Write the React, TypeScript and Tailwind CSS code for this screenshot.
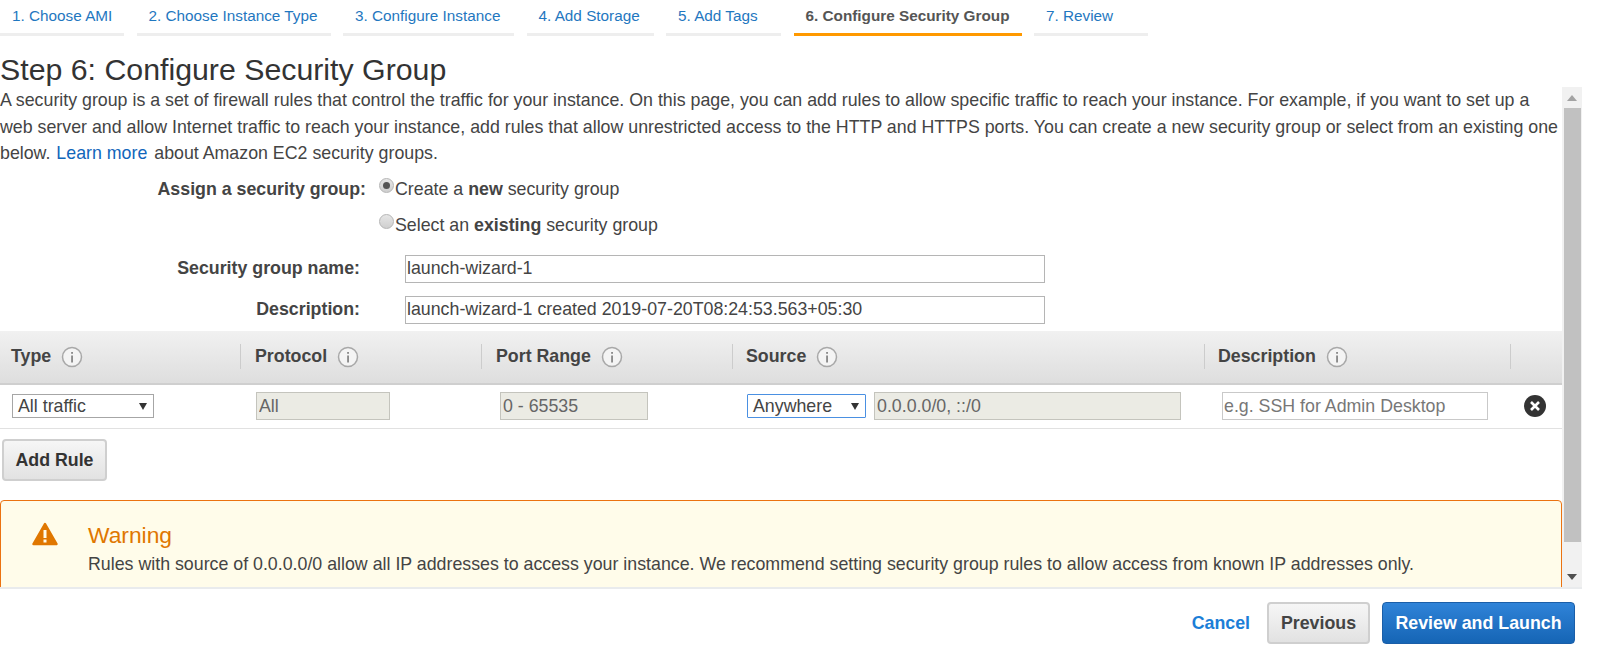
import React from "react";

const tabs = [
  { label: "1. Choose AMI", w: "w-[124px]" },
  { label: "2. Choose Instance Type", w: "w-[194px]" },
  { label: "3. Configure Instance", w: "w-[171px]" },
  { label: "4. Add Storage", w: "w-[127px]" },
  { label: "5. Add Tags", w: "w-[115px]" },
  { label: "6. Configure Security Group", w: "w-[228px]", active: true },
  { label: "7. Review", w: "w-[114px]" },
];

const columns = [
  { label: "Type", w: "w-[240px]", pl: "pl-[11px]" },
  { label: "Protocol", w: "w-[241px]", pl: "pl-[14px]" },
  { label: "Port Range", w: "w-[251px]", pl: "pl-[14px]" },
  { label: "Source", w: "w-[472px]", pl: "pl-[13px]" },
  { label: "Description", w: "w-[306px]", pl: "pl-[13px]" },
];

function InfoIcon() {
  return (
    <svg width="22" height="22" viewBox="0 0 22 22" className="shrink-0">
      <circle cx="11" cy="11" r="9.5" fill="#f4f4f4" stroke="#a8a8a8" strokeWidth="1.5" />
      <rect x="10.2" y="9.5" width="1.7" height="7" fill="#808080" />
      <rect x="10.2" y="6" width="1.7" height="1.8" fill="#808080" />
    </svg>
  );
}

function Radio({ checked }: { checked?: boolean }) {
  return (
    <span className="mt-[-8px] flex h-[15px] w-[15px] shrink-0 items-center justify-center rounded-full border border-[#b5b5b5] bg-gradient-to-b from-[#e6e6e6] to-[#cfcfcf]">
      {checked && <span className="h-[7px] w-[7px] rounded-full bg-[#555]" />}
    </span>
  );
}

function SelectBox({ label, className }: { label: string; className: string }) {
  return (
    <div className={`flex h-[24px] items-center justify-between bg-white pr-[6px] text-[17.8px] text-[#444] ${className}`}>
      <span>{label}</span>
      <svg width="8" height="8" viewBox="0 0 8 8">
        <path d="M0 1h8L4 8z" fill="#333" />
      </svg>
    </div>
  );
}

function DisabledInput({ value, className }: { value: string; className: string }) {
  return (
    <input
      readOnly
      value={value}
      className={`h-[28px] border border-[#c4c4bd] bg-[#ebebe4] pl-[2px] text-[17.8px] text-[#666] outline-none ${className}`}
    />
  );
}

export default function App() {
  return (
    <div className="h-[656px] w-[1600px] overflow-hidden bg-white font-['Liberation_Sans',Arial,sans-serif] text-[#444]">
      <div className="flex h-[36px] gap-[12.5px]">
        {tabs.map((t) => (
          <div
            key={t.label}
            className={`${t.w} border-b-[3px] pl-[12px] pt-[7px] text-[15.3px] leading-[17px] ${
              t.active ? "border-[#ff9900] font-bold text-[#555]" : "border-[#eeeeee] text-[#1f77c0]"
            }`}
          >
            {t.label}
          </div>
        ))}
      </div>

      <h1 className="h-[51px] pt-[16px] text-[30.3px] leading-[36px] text-[#333]">Step 6: Configure Security Group</h1>

      <div className="flex h-[502px] w-[1582px] border-b-2 border-[#e9ebed]">
        <div className="w-[1562px] overflow-hidden">
          <p className="w-[1562px] text-[17.8px] leading-[26.5px] text-[#444]">
            A security group is a set of firewall rules that control the traffic for your instance. On this page, you can add rules to allow specific traffic to reach your instance. For example, if you want to set up a
            <br />
            web server and allow Internet traffic to reach your instance, add rules that allow unrestricted access to the HTTP and HTTPS ports. You can create a new security group or select from an existing one
            <br />
            below. <a className="ml-[1px] mr-[2px] text-[#1166bb]">Learn more</a> about Amazon EC2 security groups.
          </p>

          <div className="mt-[11px] flex h-[24px] items-center">
            <div className="w-[366px] text-right text-[17.8px] font-bold">Assign a security group:</div>
            <div className="ml-[13px] flex items-center">
              <Radio checked />
              <span className="ml-[1px] text-[17.8px]">
                Create a <b>new</b> security group
              </span>
            </div>
          </div>
          <div className="mt-[12px] flex h-[24px] items-center pl-[379px]">
            <Radio />
            <span className="ml-[1px] text-[17.8px]">
              Select an <b>existing</b> security group
            </span>
          </div>

          <div className="mt-[17px] flex h-[28px] items-center">
            <div className="w-[360px] text-right text-[17.8px] font-bold">Security group name:</div>
            <input
              readOnly
              value="launch-wizard-1"
              className="ml-[45px] h-[28px] w-[640px] border border-[#b5b5b5] pl-[1px] text-[17.8px] text-[#444] outline-none"
            />
          </div>
          <div className="mt-[13px] flex h-[28px] items-center">
            <div className="w-[360px] text-right text-[17.8px] font-bold">Description:</div>
            <input
              readOnly
              value="launch-wizard-1 created 2019-07-20T08:24:53.563+05:30"
              className="ml-[45px] h-[28px] w-[640px] border border-[#b5b5b5] pl-[1px] text-[17.8px] text-[#444] outline-none"
            />
          </div>

          <div className="mt-[7px] flex h-[54px] items-center border-b-2 border-[#cfcfcf] bg-gradient-to-b from-[#f1f1f1] to-[#dedede]">
            {columns.map((c, i) => (
              <div
                key={c.label}
                className={`flex h-[25px] items-center gap-[10px] ${c.w} ${c.pl} ${i > 0 ? "border-l border-[#cccccc]" : ""}`}
              >
                <span className="text-[17.8px] font-bold text-[#444]">{c.label}</span>
                <InfoIcon />
              </div>
            ))}
            <div className="h-[25px] border-l border-[#cccccc]" />
          </div>

          <div className="flex h-[44px] items-center border-b border-[#e1e1e1]">
            <SelectBox label="All traffic" className="ml-[12px] w-[142px] border border-[#a6a6a6] pl-[5px]" />
            <DisabledInput value="All" className="ml-[102px] w-[134px]" />
            <DisabledInput value="0 - 65535" className="ml-[110px] w-[148px]" />
            <SelectBox label="Anywhere" className="ml-[99px] w-[119px] rounded-[1px] border-[1.5px] border-[#4a90e2] pl-[5px]" />
            <DisabledInput value="0.0.0.0/0, ::/0" className="ml-[8px] w-[307px]" />
            <input
              readOnly
              placeholder="e.g. SSH for Admin Desktop"
              className="ml-[41px] h-[28px] w-[266px] border border-[#c9c9c9] pl-[1px] text-[17.8px] outline-none placeholder:text-[#777]"
            />
            <svg width="22" height="22" viewBox="0 0 22 22" className="ml-[36px] shrink-0">
              <circle cx="11" cy="11" r="11" fill="#333333" />
              <path d="M7 7l8 8M15 7l-8 8" stroke="#ffffff" strokeWidth="2.6" />
            </svg>
          </div>

          <button className="ml-[2px] mt-[10px] flex h-[42px] w-[105px] items-center justify-center rounded-[4px] border-2 border-[#cfcfcf] bg-gradient-to-b from-[#f6f6f6] to-[#e2e2e2] pt-[1px] text-[17.8px] font-bold text-[#333]">
            Add Rule
          </button>

          <div className="mt-[19px] flex h-[110px] rounded-[4px] border-[1.5px] border-[#eb7211] bg-[#fffcea] pl-[31px] pt-[21px]">
            <svg width="26" height="24" viewBox="0 0 26 24" className="shrink-0">
              <path d="M13 2L24.5 22H1.5z" fill="#e07700" stroke="#e07700" strokeWidth="2.5" strokeLinejoin="round" />
              <rect x="11.5" y="8" width="3" height="8" fill="#fffcea" />
              <rect x="11.5" y="17.5" width="3" height="3" fill="#fffcea" />
            </svg>
            <div className="ml-[30px]">
              <div className="text-[22.8px] leading-[26px] text-[#e07700]">Warning</div>
              <div className="mt-[4px] text-[17.8px] leading-[24px] text-[#444]">
                Rules with source of 0.0.0.0/0 allow all IP addresses to access your instance. We recommend setting security group rules to allow access from known IP addresses only.
              </div>
            </div>
          </div>
        </div>

        <div className="flex w-[20px] flex-col items-center bg-[#f1f1f1]">
          <div className="flex h-[21px] w-full items-center justify-center">
            <svg width="10" height="6" viewBox="0 0 10 6">
              <path d="M5 0l5 6H0z" fill="#a3a3a3" />
            </svg>
          </div>
          <div className="h-[434px] w-[17px] bg-[#c1c1c1]" />
          <div className="flex flex-1 items-end pb-[7px]">
            <svg width="10" height="6" viewBox="0 0 10 6">
              <path d="M0 0h10L5 6z" fill="#505050" />
            </svg>
          </div>
        </div>
      </div>

      <div className="flex items-center justify-end pr-[25px] pt-[13px]">
        <a className="text-[17.8px] font-bold text-[#1b7ed7]">Cancel</a>
        <button className="ml-[17px] h-[42px] w-[103px] rounded-[4px] border-2 border-[#cfcfcf] bg-gradient-to-b from-[#f6f6f6] to-[#e2e2e2] text-[17.8px] font-bold text-[#444]">
          Previous
        </button>
        <button className="ml-[12px] h-[42px] w-[193px] rounded-[4px] border border-[#1a5ea8] bg-gradient-to-b from-[#2f83d8] to-[#1565b5] text-[17.8px] font-bold text-white">
          Review and Launch
        </button>
      </div>
    </div>
  );
}
